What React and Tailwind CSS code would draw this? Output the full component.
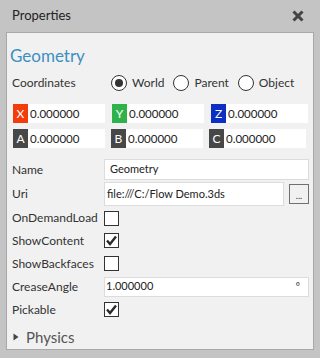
import React, { useState } from 'react';

const font = { fontFamily: 'Lato, "Noto Sans", sans-serif' };

const Check = ({ checked }) => (
  <div className="w-[15px] h-[15px] border border-[#333] bg-white flex items-center justify-center">
    {checked && (
      <svg width="13" height="13" viewBox="0 0 13 13">
        <path d="M2 6.5 L5 10 L11 2.5" fill="none" stroke="#2b2b2b" strokeWidth="2.4" />
      </svg>
    )}
  </div>
);

const Radio = ({ on, label }) => (
  <div className="flex items-center gap-[5px]">
    <div className="w-[16px] h-[16px] rounded-full border border-[#333] bg-white flex items-center justify-center">
      {on && <div className="w-[8px] h-[8px] rounded-full bg-[#333]" />}
    </div>
    <span>{label}</span>
  </div>
);

const Coord = ({ letter, color, w }) => (
  <div className={`flex h-[19px] bg-white ${w}`}>
    <div className={`w-[15px] h-[19px] text-white flex items-center justify-center text-[12px] ${color}`}>{letter}</div>
    <div className="pl-[2px] flex items-center text-[11.5px] text-[#222]">0.000000</div>
  </div>
);

const Row = ({ label, h, children }) => (
  <div className={`flex items-center ${h}`}>
    <div className="w-[97px] pl-[5px] text-[#333]">{label}</div>
    {children}
  </div>
);

export default function App() {
  const [coords] = useState('World');
  return (
    <div className="w-[320px] h-[358px] bg-[#c4c4c4] text-[12px]" style={font}>
      <div className="h-[32px] flex items-center justify-between pl-[12px] pr-[16px]">
        <span className="text-[13px] text-[#222]">Properties</span>
        <svg width="12" height="12" viewBox="0 0 12 12">
          <path d="M1.5 1.5 L10.5 10.5 M10.5 1.5 L1.5 10.5" stroke="#444" strokeWidth="3" />
        </svg>
      </div>
      <div className="mx-[6px] h-[318px] border border-[#a8a8a8] bg-[#f1f1f1]">
        <div className="pl-[3px] pt-[11px] h-[38px] text-[17px] text-[#3c8fc2] leading-[24px]">Geometry</div>
        <div className="flex items-center h-[24px] pl-[5px] text-[#333]">
          <span className="w-[99px]">Coordinates</span>
          <div className="flex gap-[9px]">
            <Radio on={coords === 'World'} label="World" />
            <Radio on={coords === 'Parent'} label="Parent" />
            <Radio on={coords === 'Object'} label="Object" />
          </div>
        </div>
        <div className="pl-[6px] pt-[9px] flex flex-col gap-[6px]">
          <div className="flex gap-[7px]">
            <Coord letter="X" color="bg-[#f33c0c]" w="w-[92px]" />
            <Coord letter="Y" color="bg-[#2eb24a]" w="w-[92px]" />
            <Coord letter="Z" color="bg-[#0a2fc2]" w="w-[97px]" />
          </div>
          <div className="flex gap-[6px]">
            <Coord letter="A" color="bg-[#474747]" w="w-[92px]" />
            <Coord letter="B" color="bg-[#474747]" w="w-[92px]" />
            <Coord letter="C" color="bg-[#474747]" w="w-[97px]" />
          </div>
        </div>
        <div className="pt-[10px] flex flex-col">
          <Row label="Name" h="h-[23px]">
            <div className="w-[205px] h-[21px] bg-white border border-[#dcdcdc] pl-[5px] flex items-center text-[11px] text-[#222]">Geometry</div>
          </Row>
          <Row label="Uri" h="h-[26px]">
            <div className="w-[180px] h-[24px] bg-white border border-[#dcdcdc] pl-[2px] flex items-center text-[11px] text-[#222]">file:///C:/Flow Demo.3ds</div>
            <div className="ml-[5px] w-[20px] h-[20px] border border-[#707070] bg-[#f1f1f1] flex items-center justify-center text-[9px] leading-none text-[#333] pt-[3px]">...</div>
          </Row>
          <Row label="OnDemandLoad" h="h-[22px]"><Check /></Row>
          <Row label="ShowContent" h="h-[23px]"><Check checked /></Row>
          <Row label="ShowBackfaces" h="h-[23px]"><Check /></Row>
          <Row label="CreaseAngle" h="h-[23px]">
            <div className="w-[205px] h-[20px] bg-white border border-[#dcdcdc] pl-[1px] pr-[8px] flex items-center justify-between text-[11px] text-[#222]">
              <span>1.000000</span>
              <span className="text-[10px]">°</span>
            </div>
          </Row>
          <Row label="Pickable" h="h-[23px]"><Check checked /></Row>
          <div className="flex items-center h-[32px] pl-[6px] text-[15px] text-[#555]">
            <svg width="6" height="8" viewBox="0 0 6 8" className="mr-[7px]">
              <path d="M0.5 0.5 L5.5 4 L0.5 7.5 Z" fill="#444" />
            </svg>
            <span>Physics</span>
          </div>
        </div>
      </div>
    </div>
  );
}
